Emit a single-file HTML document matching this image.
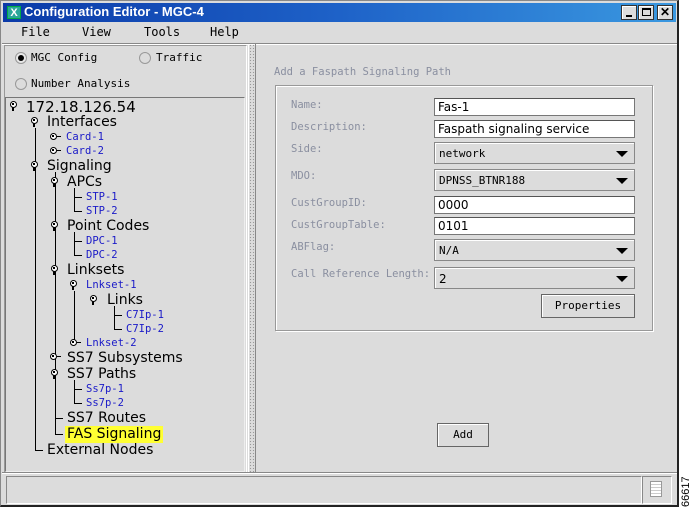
<!DOCTYPE html>
<html><head><meta charset="utf-8"><style>
*{margin:0;padding:0;box-sizing:border-box}
body{width:692px;height:509px;background:#fff;position:relative;overflow:hidden;font-family:"DejaVu Sans","Liberation Sans",sans-serif}
.a{position:absolute}
#win{left:0;top:0;width:679px;height:507px;background:#dcdcdc;border:1px solid #888;border-right:2px solid #222;border-bottom:2px solid #222}
.t{position:absolute;white-space:nowrap}
.big{font-size:14px;color:#000}
.sm{font-family:"DejaVu Sans Mono","Liberation Mono",monospace;font-size:10.5px;color:#1a1ac8}
.mono{font-family:"DejaVu Sans Mono","Liberation Mono",monospace;font-size:11px}
.lbl{font-family:"DejaVu Sans Mono","Liberation Mono",monospace;font-size:10.5px;color:#8a8fa0}
.vl{position:absolute;width:1px;background:#000}
.hl{position:absolute;height:1px;background:#000}
.ico{position:absolute;width:7px;height:7px;border:1.5px solid #000;border-radius:50%;background:#fff}
.ico::after{content:"";position:absolute;left:1px;top:1px;width:2px;height:2px;background:#000}
.ico.o::before{content:"";position:absolute;left:1px;top:5px;width:1.5px;height:4px;background:#000}
.ico.c::before{content:"";position:absolute;left:6px;top:1.5px;width:4px;height:1.5px;background:#000}
.fld{position:absolute;left:434px;width:201px;height:18px;background:#fff;border:1px solid #777;border-top-color:#555;font-family:"DejaVu Sans","Liberation Sans",sans-serif;font-size:12px;padding-left:3px;line-height:16px}
.cmb{position:absolute;left:434px;width:201px;height:22px;background:#dcdcdc;border:1px solid #888;box-shadow:inset 1px 1px 0 #fff;font-family:"DejaVu Sans Mono","Liberation Mono",monospace;font-size:11px;padding-left:4px;line-height:22px}
.cmb::after{content:"";position:absolute;right:6px;top:8px;border-left:6px solid transparent;border-right:6px solid transparent;border-top:6px solid #000}
.btn{position:absolute;background:#dcdcdc;border:1px solid #666;box-shadow:inset 1px 1px 0 #fff;font-family:"DejaVu Sans Mono","Liberation Mono",monospace;font-size:11px;text-align:center}
</style></head><body>
<div id="win" class="a"></div>
<div class="a" style="left:3px;top:3px;width:673px;height:19px;background:linear-gradient(90deg,#0b3aa8,#1e62c8 50%,#3a98e0)"></div>
<div class="a" style="left:7px;top:6px;width:14px;height:13px;background:#2aa69a;color:#fff;font:bold 11px 'Liberation Sans',sans-serif;text-align:center;line-height:13px;border:1px solid #0a4">X</div>
<div class="t" style="left:24px;top:4px;color:#fff;font:bold 13px 'Liberation Sans',sans-serif">Configuration Editor - MGC-4</div>
<div class="a" style="left:621px;top:5px;width:16px;height:15px;background:#ddd;border:1px solid #333;box-shadow:inset 1px 1px #fff"><div class="a" style="left:4px;top:9px;width:6px;height:2px;background:#000"></div></div>
<div class="a" style="left:638px;top:5px;width:16px;height:15px;background:#ddd;border:1px solid #333;box-shadow:inset 1px 1px #fff"><div class="a" style="left:3px;top:2px;width:9px;height:8px;border:1px solid #000;border-top-width:2px"></div></div>
<div class="a" style="left:657px;top:5px;width:16px;height:15px;background:#ddd;border:1px solid #333;box-shadow:inset 1px 1px #fff;font:bold 12px 'Liberation Sans',sans-serif;text-align:center;line-height:13px">✕</div>
<div class="t mono" style="left:21px;top:25px;font-size:12px">File</div>
<div class="t mono" style="left:82px;top:25px;font-size:12px">View</div>
<div class="t mono" style="left:144px;top:25px;font-size:12px">Tools</div>
<div class="t mono" style="left:210px;top:25px;font-size:12px">Help</div>
<div class="a" style="left:2px;top:43px;width:675px;height:2px;border-top:1px solid #888;border-bottom:1px solid #fff"></div>
<div class="a" style="left:4px;top:45px;width:243px;height:428px;border:1px solid #999;border-right-color:#fff;border-bottom-color:#fff"></div>
<div class="a" style="left:15px;top:52px;width:12px;height:12px;border-radius:50%;border:1px solid #999;background:#e8e8e8"><div class="a" style="left:2px;top:2px;width:6px;height:6px;border-radius:50%;background:#000"></div></div>
<div class="t mono" style="left:31px;top:51px">MGC Config</div>
<div class="a" style="left:139px;top:52px;width:12px;height:12px;border-radius:50%;border:1px solid #999"></div>
<div class="t mono" style="left:156px;top:51px">Traffic</div>
<div class="a" style="left:15px;top:78px;width:12px;height:12px;border-radius:50%;border:1px solid #999"></div>
<div class="t mono" style="left:31px;top:77px">Number Analysis</div>
<div class="a" style="left:5px;top:97px;width:240px;height:375px;border:1px solid #777;border-right-color:#eee;border-bottom-color:#eee"></div>
<div class="vl" style="left:35px;top:128px;height:323px"></div><div class="hl" style="left:35px;top:450px;width:8px"></div>
<div class="vl" style="left:55px;top:172px;height:262px"></div><div class="hl" style="left:55px;top:418px;width:8px"></div><div class="hl" style="left:55px;top:434px;width:8px"></div>
<div class="vl" style="left:74px;top:188px;height:23px"></div><div class="hl" style="left:74px;top:197px;width:8px"></div><div class="hl" style="left:74px;top:211px;width:8px"></div>
<div class="vl" style="left:74px;top:232px;height:23px"></div><div class="hl" style="left:74px;top:241px;width:8px"></div><div class="hl" style="left:74px;top:255px;width:8px"></div>
<div class="vl" style="left:74px;top:291px;height:50px"></div>
<div class="vl" style="left:114px;top:306px;height:23px"></div><div class="hl" style="left:114px;top:315px;width:8px"></div><div class="hl" style="left:114px;top:329px;width:8px"></div>
<div class="vl" style="left:74px;top:380px;height:23px"></div><div class="hl" style="left:74px;top:389px;width:8px"></div><div class="hl" style="left:74px;top:403px;width:8px"></div>
<div class="ico o" style="left:10px;top:101px"></div>
<div class="ico o" style="left:31px;top:117px"></div>
<div class="ico c" style="left:50px;top:133px"></div>
<div class="ico c" style="left:50px;top:147px"></div>
<div class="ico o" style="left:31px;top:161px"></div>
<div class="ico o" style="left:51px;top:177px"></div>
<div class="ico o" style="left:51px;top:221px"></div>
<div class="ico o" style="left:51px;top:265px"></div>
<div class="ico o" style="left:70px;top:280px"></div>
<div class="ico o" style="left:90px;top:295px"></div>
<div class="ico c" style="left:70px;top:339px"></div>
<div class="ico c" style="left:50px;top:353px"></div>
<div class="ico o" style="left:51px;top:369px"></div>
<div class="t big" style="left:26px;top:98px;font-size:15px">172.18.126.54</div>
<div class="t big" style="left:47px;top:114px">Interfaces</div>
<div class="t sm" style="left:66px;top:131px">Card-1</div>
<div class="t sm" style="left:66px;top:145px">Card-2</div>
<div class="t big" style="left:47px;top:158px">Signaling</div>
<div class="t big" style="left:67px;top:174px">APCs</div>
<div class="t sm" style="left:86px;top:191px">STP-1</div>
<div class="t sm" style="left:86px;top:205px">STP-2</div>
<div class="t big" style="left:67px;top:218px">Point Codes</div>
<div class="t sm" style="left:86px;top:235px">DPC-1</div>
<div class="t sm" style="left:86px;top:249px">DPC-2</div>
<div class="t big" style="left:67px;top:262px">Linksets</div>
<div class="t sm" style="left:86px;top:279px">Lnkset-1</div>
<div class="t big" style="left:107px;top:292px">Links</div>
<div class="t sm" style="left:126px;top:309px">C7Ip-1</div>
<div class="t sm" style="left:126px;top:323px">C7Ip-2</div>
<div class="t sm" style="left:86px;top:337px">Lnkset-2</div>
<div class="t big" style="left:67px;top:350px">SS7 Subsystems</div>
<div class="t big" style="left:67px;top:366px">SS7 Paths</div>
<div class="t sm" style="left:86px;top:383px">Ss7p-1</div>
<div class="t sm" style="left:86px;top:397px">Ss7p-2</div>
<div class="t big" style="left:67px;top:410px">SS7 Routes</div>
<div class="t big" style="left:65px;top:426px;background:#ffff33;padding:0 2px;height:17px">FAS Signaling</div>
<div class="t big" style="left:47px;top:442px">External Nodes</div>
<div class="a" style="left:248px;top:44px;width:8px;height:430px;background-image:radial-gradient(#999 0.7px,transparent 0.8px);background-size:3px 3px;border-left:1px solid #fff;border-right:1px solid #888"></div>
<div class="t lbl" style="left:274px;top:66px">Add a Faspath Signaling Path</div>
<div class="a" style="left:275px;top:85px;width:378px;height:246px;border:1px solid #999;box-shadow:1px 1px 0 #fff,inset 1px 1px 0 #fff"></div>
<div class="t lbl" style="left:291px;top:99px">Name:</div>
<div class="t lbl" style="left:291px;top:121px">Description:</div>
<div class="t lbl" style="left:291px;top:143px">Side:</div>
<div class="t lbl" style="left:291px;top:170px">MDO:</div>
<div class="t lbl" style="left:291px;top:197px">CustGroupID:</div>
<div class="t lbl" style="left:291px;top:219px">CustGroupTable:</div>
<div class="t lbl" style="left:291px;top:241px">ABFlag:</div>
<div class="t lbl" style="left:291px;top:268px">Call Reference Length:</div>
<div class="fld" style="top:98px">Fas-1</div>
<div class="fld" style="top:120px">Faspath signaling service</div>
<div class="cmb" style="top:142px">network</div>
<div class="cmb" style="top:169px">DPNSS_BTNR188</div>
<div class="fld" style="top:196px">0000</div>
<div class="fld" style="top:217px">0101</div>
<div class="cmb" style="top:239px">N/A</div>
<div class="cmb" style="top:267px;font-family:'DejaVu Sans',sans-serif;font-size:12px">2</div>
<div class="btn" style="left:541px;top:294px;width:94px;height:24px;line-height:22px">Properties</div>
<div class="btn" style="left:437px;top:423px;width:52px;height:24px;line-height:22px">Add</div>
<div class="a" style="left:2px;top:472px;width:675px;height:2px;border-top:1px solid #888;border-bottom:1px solid #fff"></div>
<div class="a" style="left:6px;top:476px;width:636px;height:28px;border:1px solid #888;border-right-color:#fff;border-bottom-color:#fff"></div>
<div class="a" style="left:642px;top:476px;width:30px;height:28px;border:1px solid #888;border-right-color:#fff;border-bottom-color:#fff"></div>
<div class="a" style="left:650px;top:481px;width:12px;height:16px;background:#fff;border:1px solid #999;background-image:repeating-linear-gradient(#fff 0 2px,#ccc 2px 3px)"></div>
<div class="t" style="font:11px 'Liberation Sans',sans-serif;transform:rotate(-90deg);transform-origin:0 0;color:#000;left:680px;top:507px">66617</div>
</body></html>
